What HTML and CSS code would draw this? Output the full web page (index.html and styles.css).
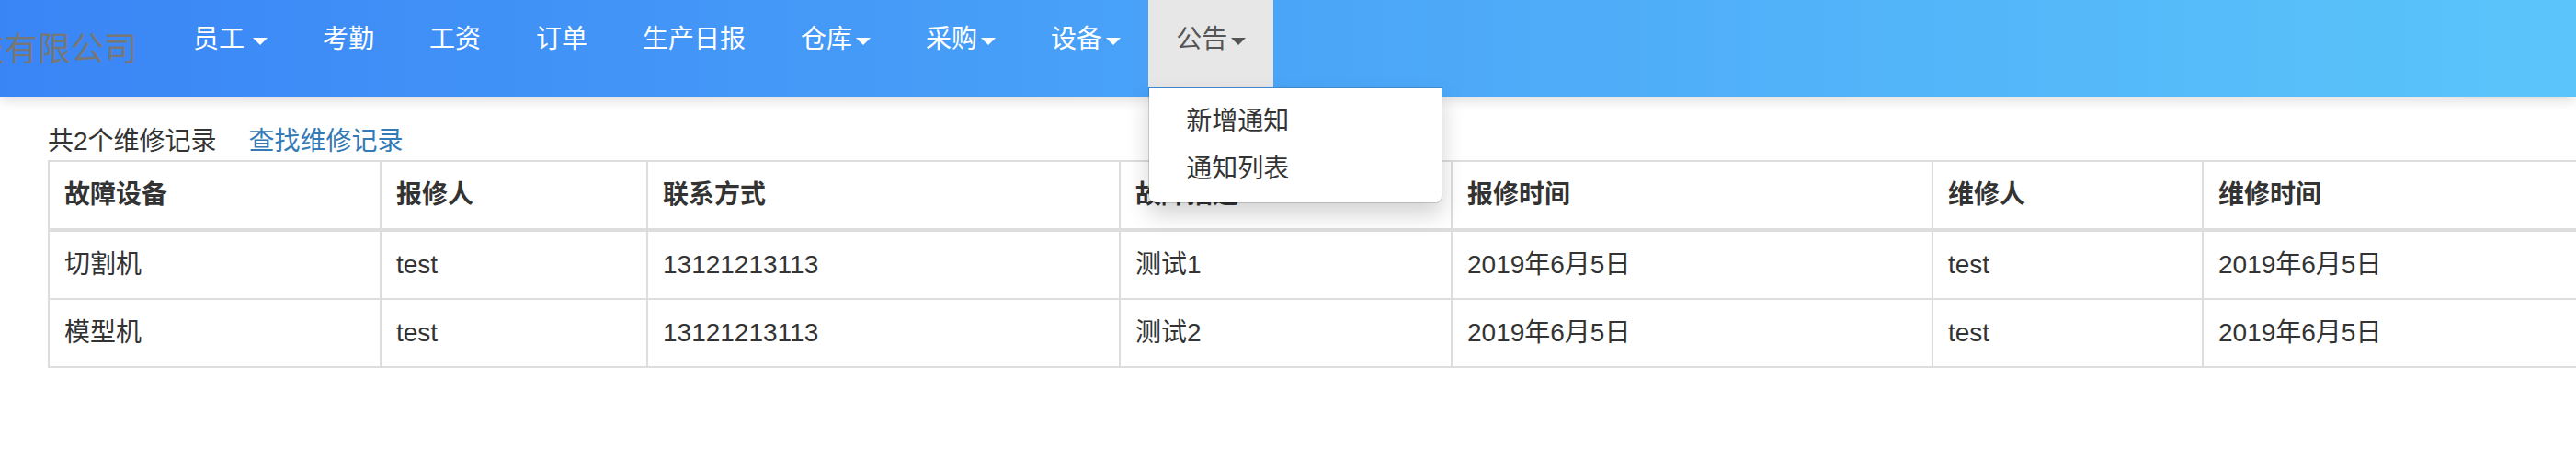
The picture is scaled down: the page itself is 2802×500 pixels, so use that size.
FILE: index.html
```html
<!DOCTYPE html>
<html lang="zh-CN">
<head>
<meta charset="utf-8">
<title>维修记录</title>
<link rel="stylesheet" href="styles.css">
</head>
<body>
<nav class="navbar">
  <div class="brand"><span class="brand-text">技有限公司</span></div>
  <ul class="nav">
    <li class="nav-item"><a class="nav-link">员工<b class="caret caret-spaced"></b></a></li>
    <li class="nav-item"><a class="nav-link">考勤</a></li>
    <li class="nav-item"><a class="nav-link">工资</a></li>
    <li class="nav-item"><a class="nav-link">订单</a></li>
    <li class="nav-item"><a class="nav-link">生产日报</a></li>
    <li class="nav-item"><a class="nav-link">仓库<b class="caret"></b></a></li>
    <li class="nav-item"><a class="nav-link">采购<b class="caret"></b></a></li>
    <li class="nav-item"><a class="nav-link">设备<b class="caret"></b></a></li>
    <li class="nav-item open">
      <a class="nav-link">公告<b class="caret"></b></a>
      <ul class="dropdown">
        <li><a class="dropdown-link">新增通知</a></li>
        <li><a class="dropdown-link">通知列表</a></li>
      </ul>
    </li>
  </ul>
</nav>
<main class="content">
  <p class="summary">共2个维修记录<a class="find-link">查找维修记录</a></p>
  <table class="records">
    <thead>
      <tr>
        <th class="col-device">故障设备</th>
        <th class="col-reporter">报修人</th>
        <th class="col-contact">联系方式</th>
        <th class="col-desc">故障描述</th>
        <th class="col-rtime">报修时间</th>
        <th class="col-repairer">维修人</th>
        <th class="col-time">维修时间</th>
      </tr>
    </thead>
    <tbody>
      <tr>
        <td>切割机</td><td>test</td><td>13121213113</td><td>测试1</td><td>2019年6月5日</td><td>test</td><td>2019年6月5日</td>
      </tr>
      <tr>
        <td>模型机</td><td>test</td><td>13121213113</td><td>测试2</td><td>2019年6月5日</td><td>test</td><td>2019年6月5日</td>
      </tr>
    </tbody>
  </table>
</main>
</body>
</html>
```
FILE: styles.css
```css
* { box-sizing: border-box; }

html, body {
  margin: 0;
  padding: 0;
  background: #fff;
}

body {
  font-family: "Liberation Sans", "Noto Sans CJK SC", sans-serif;
  font-size: 28px;
  line-height: 40px;
  color: #333;
  overflow-x: hidden;
}

.navbar {
  position: relative;
  z-index: 10;
  display: flex;
  height: 105px;
  background: linear-gradient(to right, #3a85f6, #5bc5fa);
  box-shadow: 0 4px 12px rgba(0, 0, 0, 0.14);
}

.brand {
  display: flex;
  justify-content: flex-end;
  width: 180px;
  padding: 34px 31px 0 0;
  overflow: hidden;
  white-space: nowrap;
}

.brand-text {
  font-size: 36px;
  line-height: 40px;
  color: #777;
}

.nav {
  display: flex;
  margin: 0;
  padding: 0;
  list-style: none;
  height: 95px;
}

.nav-item {
  position: relative;
}

.nav-link {
  display: block;
  height: 95px;
  padding: 23px 30px 0;
  color: #fff;
  white-space: nowrap;
  cursor: pointer;
}

.open .nav-link {
  background: #e7e7e7;
  color: #555;
}

.caret {
  display: inline-block;
  width: 0;
  height: 0;
  margin-left: 4px;
  vertical-align: middle;
  border-top: 8px solid;
  border-left: 8px solid transparent;
  border-right: 8px solid transparent;
}

.caret-spaced {
  margin-left: 9px;
}

.dropdown {
  position: absolute;
  top: 95px;
  left: 0;
  z-index: 20;
  min-width: 320px;
  margin: 0;
  padding: 10px 0;
  list-style: none;
  background: #fff;
  background-clip: padding-box;
  border: 1px solid rgba(0, 0, 0, 0.15);
  border-radius: 0 0 8px 8px;
  box-shadow: 0 12px 24px rgba(0, 0, 0, 0.175);
}

.dropdown-link {
  display: block;
  padding: 6px 40px;
  line-height: 40px;
  color: #333;
  white-space: nowrap;
}

.content {
  padding: 0 0 0 52px;
  overflow: hidden;
}

.summary {
  margin: 29px 0 0;
  line-height: 40px;
}

.find-link {
  margin-left: 35px;
  color: #337ab7;
  text-decoration: none;
}

.records {
  table-layout: fixed;
  width: 2843px;
  border-collapse: collapse;
  border-spacing: 0;
}

.records th,
.records td {
  padding: 16px;
  border: 2px solid #ddd;
  text-align: left;
  vertical-align: top;
  line-height: 40px;
  white-space: nowrap;
}

.records th {
  font-weight: bold;
  border-bottom-width: 4px;
}

.col-device { width: 361px; }
.col-reporter { width: 290px; }
.col-contact { width: 514px; }
.col-desc { width: 361px; }
.col-rtime { width: 523px; }
.col-repairer { width: 294px; }
.col-time { width: 500px; }
```
